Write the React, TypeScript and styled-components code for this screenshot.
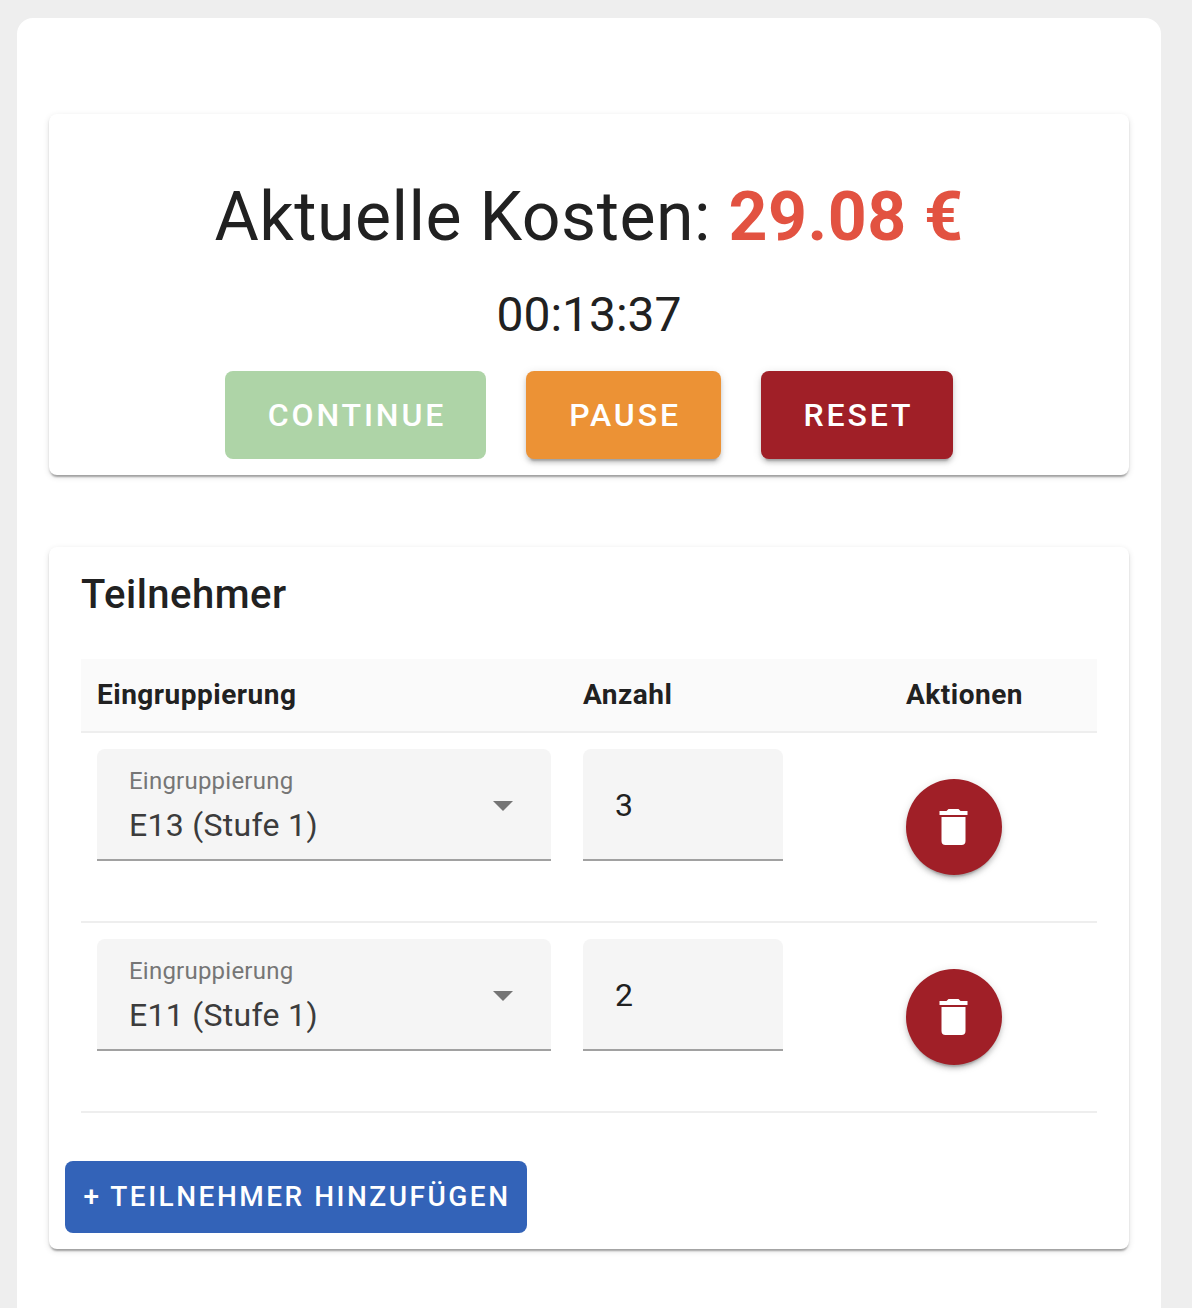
import React, { useState } from "react";
import styled, { createGlobalStyle } from "styled-components";

const GlobalStyle = createGlobalStyle`
  *, *::before, *::after { box-sizing: border-box; }
  body {
    margin: 0;
    background: #eeeeee;
    color: #212121;
    font-family: Roboto, "Liberation Sans", sans-serif;
    font-size: 32px;
    overflow: hidden;
  }
  button, input { font-family: inherit; }
`;

const Page = styled.div`
  height: 1308px;
  padding: 18px 31px 0 17px;
  overflow: hidden;
`;

const Sheet = styled.main`
  display: flex;
  flex-direction: column;
  gap: 72px;
  height: 1340px;
  padding: 96px 32px 0;
  border-radius: 16px;
  background: #fff;
`;

const Card = styled.section`
  border-radius: 8px;
  background: #fff;
  box-shadow: 0 4px 2px -2px rgba(0, 0, 0, 0.2), 0 2px 2px 0 rgba(0, 0, 0, 0.14),
    0 2px 6px 0 rgba(0, 0, 0, 0.12);
`;

const CostCard = styled(Card)`
  display: flex;
  flex-direction: column;
  align-items: center;
  height: 361px;
  padding-top: 63px;
`;

const CostTitle = styled.h1`
  margin: 0;
  font-size: 68px;
  font-weight: 400;
  line-height: 80px;
  letter-spacing: 0.0073529412em;
`;

const Amount = styled.span`
  color: #e25241;
  font-weight: 700;
`;

const Timer = styled.div`
  margin-top: 26px;
  font-size: 48px;
  line-height: 64px;
`;

const ButtonRow = styled.div`
  display: flex;
  gap: 40px;
  margin-top: 24px;
`;

const ActionButton = styled.button<{ $color: string; $width: number }>`
  width: ${(p) => p.$width}px;
  height: 88px;
  padding: 0 0 0 3px;
  border: 0;
  border-radius: 8px;
  background: ${(p) => p.$color};
  color: #fff;
  font-size: 32px;
  font-weight: 500;
  letter-spacing: 0.0892857143em;
  text-transform: uppercase;
  box-shadow: 0 6px 2px -4px rgba(0, 0, 0, 0.2), 0 4px 4px 0 rgba(0, 0, 0, 0.14),
    0 2px 10px 0 rgba(0, 0, 0, 0.12);

  &:disabled {
    box-shadow: none;
  }
`;

const PeopleCard = styled(Card)`
  height: 702px;
  padding: 16px;
`;

const CardTitle = styled.h2`
  margin: 0;
  padding: 0 16px;
  font-size: 40px;
  font-weight: 500;
  line-height: 64px;
  letter-spacing: 0.0125em;
`;

const Table = styled.div`
  margin: 32px 16px 48px;
`;

const Row = styled.div`
  display: grid;
  grid-template-columns: 486px 323px 1fr;
  height: 190px;
  padding-left: 16px;
  border-bottom: 2px solid #eeeeee;
`;

const HeadRow = styled(Row)`
  align-items: center;
  height: 74px;
  padding-bottom: 2px;
  background: #fafafa;
  font-size: 28px;
  font-weight: 700;
  letter-spacing: 0.0178571429em;
`;

const SelectField = styled.div`
  display: flex;
  align-items: center;
  justify-content: space-between;
  width: 454px;
  height: 112px;
  margin-top: 16px;
  padding: 2px 24px 0 32px;
  border-bottom: 2px solid #a1a1a1;
  border-radius: 8px 8px 0 0;
  background: #f5f5f5;
`;

const FieldText = styled.div`
  display: flex;
  flex-direction: column;
`;

const FieldLabel = styled.span`
  color: #767676;
  font-size: 24px;
  line-height: 40px;
  letter-spacing: 0.009375em;
`;

const FieldValue = styled.span`
  color: #3c3c3c;
  font-size: 32px;
  line-height: 48px;
  letter-spacing: 0.009375em;
`;

const CountInput = styled.input`
  width: 200px;
  height: 112px;
  margin-top: 16px;
  padding: 2px 32px 0;
  border: 0;
  border-bottom: 2px solid #a1a1a1;
  border-radius: 8px 8px 0 0;
  outline: 0;
  background: #f5f5f5;
  color: #212121;
  font-size: 32px;
  letter-spacing: 0.009375em;
`;

const DeleteButton = styled.button`
  display: flex;
  align-items: center;
  justify-content: center;
  width: 96px;
  height: 96px;
  margin-top: 46px;
  padding: 0;
  border: 0;
  border-radius: 50%;
  background: #a01f27;
  color: #fff;
  box-shadow: 0 6px 2px -4px rgba(0, 0, 0, 0.2), 0 4px 4px 0 rgba(0, 0, 0, 0.14),
    0 2px 10px 0 rgba(0, 0, 0, 0.12);
`;

const AddButton = styled.button`
  display: block;
  width: 462px;
  height: 72px;
  padding: 0 0 2px 2px;
  border: 0;
  border-radius: 8px;
  background: #3363b8;
  color: #fff;
  font-size: 28px;
  font-weight: 500;
  letter-spacing: 0.0892857143em;
  text-transform: uppercase;
  white-space: nowrap;
`;

const Icon = styled.svg`
  display: block;
  width: 48px;
  height: 48px;
  fill: currentColor;
`;

const CaretIcon = styled(Icon)`
  color: #757575;
`;

interface Participant {
  group: string;
  count: string;
}

export default function App() {
  const [people, setPeople] = useState<Participant[]>([
    { group: "E13 (Stufe 1)", count: "3" },
    { group: "E11 (Stufe 1)", count: "2" },
  ]);

  const setCount = (index: number, count: string) =>
    setPeople(people.map((p, i) => (i === index ? { ...p, count } : p)));

  return (
    <>
      <GlobalStyle />
      <Page>
        <Sheet>
          <CostCard>
            <CostTitle>
              Aktuelle Kosten: <Amount>29.08 €</Amount>
            </CostTitle>
            <Timer>00:13:37</Timer>
            <ButtonRow>
              <ActionButton $color="#aed4a7" $width={261} disabled>
                Continue
              </ActionButton>
              <ActionButton $color="#ec9235" $width={195}>
                Pause
              </ActionButton>
              <ActionButton $color="#a01f27" $width={192}>
                Reset
              </ActionButton>
            </ButtonRow>
          </CostCard>

          <PeopleCard>
            <CardTitle>Teilnehmer</CardTitle>
            <Table>
              <HeadRow>
                <span>Eingruppierung</span>
                <span>Anzahl</span>
                <span>Aktionen</span>
              </HeadRow>
              {people.map((person, index) => (
                <Row key={index}>
                  <SelectField>
                    <FieldText>
                      <FieldLabel>Eingruppierung</FieldLabel>
                      <FieldValue>{person.group}</FieldValue>
                    </FieldText>
                    <CaretIcon viewBox="0 0 24 24">
                      <path d="M7,10L12,15L17,10H7Z" />
                    </CaretIcon>
                  </SelectField>
                  <CountInput
                    value={person.count}
                    onChange={(e) => setCount(index, e.target.value)}
                  />
                  <DeleteButton
                    aria-label="Löschen"
                    onClick={() => setPeople(people.filter((_, i) => i !== index))}
                  >
                    <Icon viewBox="0.25 0 24 24">
                      <path d="M19,4H15.5L14.5,3H9.5L8.5,4H5V6H19M6,19A2,2 0 0,0 8,21H16A2,2 0 0,0 18,19V7H6V19Z" />
                    </Icon>
                  </DeleteButton>
                </Row>
              ))}
            </Table>
            <AddButton
              onClick={() => setPeople([...people, { group: "E13 (Stufe 1)", count: "1" }])}
            >
              + Teilnehmer hinzufügen
            </AddButton>
          </PeopleCard>
        </Sheet>
      </Page>
    </>
  );
}
